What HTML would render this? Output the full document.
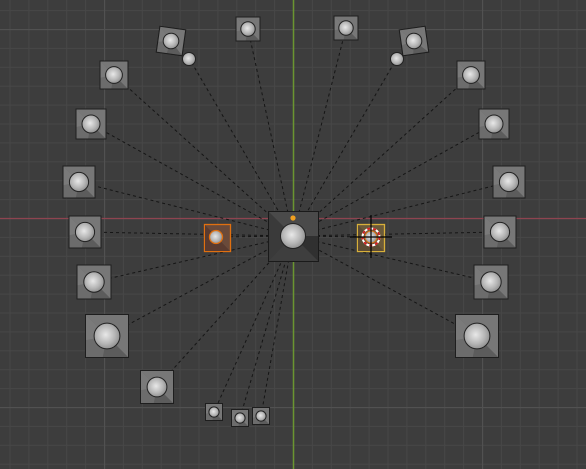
<!DOCTYPE html>
<html><head><meta charset="utf-8"><style>html,body{margin:0;padding:0;background:#3d3d3d;overflow:hidden}svg{display:block}</style></head><body>
<svg width="586" height="469" viewBox="0 0 586 469" xmlns="http://www.w3.org/2000/svg">
<defs>
<pattern id="g" x="9.5" y="10.1" width="18.9" height="18.9" patternUnits="userSpaceOnUse"><path d="M0.5 0V18.9M0 0.5H18.9" stroke="#474747" stroke-width="1"/></pattern>
<pattern id="G" x="104" y="29" width="189" height="189" patternUnits="userSpaceOnUse"><path d="M0.5 0V189M0 0.5H189" stroke="#515151" stroke-width="1.2"/></pattern>
<radialGradient id="s" cx="0.45" cy="0.45" r="0.6"><stop offset="0" stop-color="#e8e8e8"/><stop offset="0.6" stop-color="#b5b5b5"/><stop offset="1" stop-color="#8a8a8a"/></radialGradient>
<g id="cam">
<rect x="-0.5" y="-0.5" width="1" height="1" fill="#707070" stroke="#1e1e1e" stroke-width="1" vector-effect="non-scaling-stroke"/>
<path d="M-0.5 -0.5L0.5 0.5L0.5 -0.5Z" fill="#777"/>
<path d="M-0.5 -0.5L0.5 0.5L-0.5 0.5Z" fill="#6c6c6c"/>
<path d="M0 0L0.5 0.5L-0.1 0.5Z" fill="#5c5c5c"/>
<path d="M-0.5 -0.5L0 0L-0.5 0.1Z" fill="#7a7a7a"/>
<rect x="-0.5" y="-0.5" width="1" height="1" fill="none" stroke="#1e1e1e" stroke-width="1" vector-effect="non-scaling-stroke"/>
<circle r="0.3" fill="url(#s)" stroke="#222" stroke-width="1" vector-effect="non-scaling-stroke"/>
</g>
</defs>
<rect width="586" height="469" fill="#3d3d3d"/>
<rect width="586" height="469" fill="url(#g)"/>
<rect width="586" height="469" fill="url(#G)"/>
<line x1="0" y1="218.5" x2="586" y2="218.5" stroke="#8e4450" stroke-width="1.3"/>
<line x1="293.5" y1="0" x2="293.5" y2="469" stroke="#6a9530" stroke-width="1.5"/>
<g stroke="#151515" stroke-width="1" stroke-dasharray="3,3" fill="none">
<path d="M293 236L189 58M293 236L248 29M293 236L346 28M293 236L397 58M293 236L114 75M293 236L471 75M293 236L91 124M293 236L494 124M293 236L79 182M293 236L509 182M293 236L85 232M293 236L500 232M293 236L94 282M293 236L491 282M293 236L107 336M293 236L477 336M293 236L157 387M293 236L214 412M293 236L240 418M293 236L261 416M293 236L216 237M293 236L371 237"/>
</g>
<!-- side spheres -->
<circle cx="189" cy="59" r="6.5" fill="url(#s)" stroke="#222"/>
<circle cx="397" cy="59" r="6.5" fill="url(#s)" stroke="#222"/>
<g transform="translate(171,41) rotate(8) scale(26)"><use href="#cam"/></g>
<g transform="translate(248,29) scale(24)"><use href="#cam"/></g>
<g transform="translate(346,28) scale(24)"><use href="#cam"/></g>
<g transform="translate(414,41) rotate(-8) scale(26)"><use href="#cam"/></g>
<g transform="translate(114,75) scale(28)"><use href="#cam"/></g>
<g transform="translate(471,75) scale(28)"><use href="#cam"/></g>
<g transform="translate(91,124) scale(30)"><use href="#cam"/></g>
<g transform="translate(494,124) scale(30)"><use href="#cam"/></g>
<g transform="translate(79,182) scale(32)"><use href="#cam"/></g>
<g transform="translate(509,182) scale(32)"><use href="#cam"/></g>
<g transform="translate(85,232) scale(32)"><use href="#cam"/></g>
<g transform="translate(500,232) scale(32)"><use href="#cam"/></g>
<g transform="translate(94,282) scale(34)"><use href="#cam"/></g>
<g transform="translate(491,282) scale(34)"><use href="#cam"/></g>
<g transform="translate(107,336) scale(43)"><use href="#cam"/></g>
<g transform="translate(477,336) scale(43)"><use href="#cam"/></g>
<g transform="translate(157,387) scale(33)"><use href="#cam"/></g>
<g transform="translate(214,412) scale(17)"><use href="#cam"/></g>
<g transform="translate(240,418) scale(17)"><use href="#cam"/></g>
<g transform="translate(261,416) scale(17)"><use href="#cam"/></g>
<!-- center -->
<rect x="268.5" y="211.5" width="50" height="50" fill="#454545" stroke="#1a1a1a"/>
<path d="M269 212L318 261L318 212Z" fill="#4a4a4a"/>
<path d="M269 212L293 236L269 261Z" fill="#3a3a3a"/>
<path d="M293 236L318 261L269 261Z" fill="#3e3e3e"/>
<path d="M293 236L318 261L318 236Z" fill="#303030"/>
<rect x="268.5" y="211.5" width="50" height="50" fill="none" stroke="#1a1a1a"/>
<circle cx="293" cy="236" r="12.5" fill="url(#s)" stroke="#222"/>
<circle cx="293" cy="218" r="2.6" fill="#f0a020"/>
<!-- left selected -->
<rect x="204.5" y="224.5" width="26" height="27" fill="#6a4a3a" stroke="#e07010" stroke-width="1.3"/>
<path d="M205 225L230 251L205 251Z" fill="#5a3b30"/>
<circle cx="216" cy="237" r="6.5" fill="url(#s)" stroke="#e07010" stroke-width="1.3"/>
<!-- right active -->
<rect x="357.5" y="224.5" width="27" height="27" fill="#6b5a3a" stroke="#d8b03a" stroke-width="1.3"/>
<path d="M358 225L384 251L358 251Z" fill="#5d4c34"/>
<circle cx="371" cy="237" r="8.5" fill="none" stroke="#fff" stroke-width="2"/>
<circle cx="371" cy="237" r="8.5" fill="none" stroke="#d02020" stroke-width="2" stroke-dasharray="3,3"/>
<circle cx="371" cy="237" r="6" fill="url(#s)" stroke="#e07010"/>
<path d="M350 237H392M371 215V258" stroke="#000" stroke-width="1.2"/>
</svg>
</body></html>
